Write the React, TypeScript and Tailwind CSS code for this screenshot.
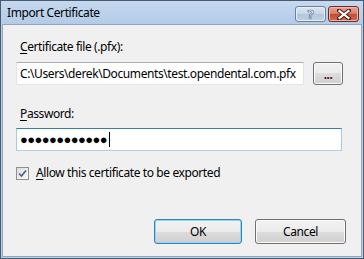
import React from "react";

const font = { fontFamily: '"Segoe UI", "Noto Sans", "Open Sans", sans-serif' };

const WinButton = ({ children, isDefault, className }: { children: React.ReactNode; isDefault?: boolean; className?: string }) => (
  <div
    className={`relative rounded-[3px] border ${isDefault ? "border-[#3c7fb1] shadow-[inset_0_0_0_1px_#7fdcfa]" : "border-[#707070] shadow-[inset_0_0_0_1px_#fbfbfb]"} bg-[linear-gradient(#f2f2f2_0%,#ebebeb_50%,#dddddd_50%,#cfcfcf_100%)] flex items-center justify-center text-[12px] text-black ${className ?? ""}`}
  >
    {children}
  </div>
);

export default function App() {
  return (
    <div className="w-[364px] h-[259px] bg-white tracking-[-0.4px]" style={font}>
      <div className="w-full h-full flex flex-col border border-[#4b5a6b] bg-[#b9d1ea]">
        {/* title bar */}
        <div className="h-[23px] flex items-center pl-[6px] pr-[4px] bg-[linear-gradient(#c5d9f0,#b3cbe7)]">
          <span className="text-[12px] text-black leading-none">Import Certificate</span>
          <div className="ml-auto flex items-center gap-[2px] pt-[3px]">
            <div className="w-[31px] h-[16px] rounded-[3px] border border-[#6f7f96] bg-[linear-gradient(#dbe6f3_0%,#c6d6ea_50%,#b1c6df_50%,#bfd2e8_100%)] flex items-center justify-center shadow-[inset_0_0_0_1px_#e8eff8]">
              <span className="text-[13px] font-bold leading-none text-white [-webkit-text-stroke:0.6px_#4c5c73]">?</span>
            </div>
            <div className="w-[31px] h-[16px] rounded-[3px] border border-[#6b2a22] bg-[linear-gradient(#e8a596_0%,#d67a68_50%,#c24a33_50%,#d06a50_100%)] flex items-center justify-center shadow-[inset_0_0_0_1px_#efb8ac]">
              <svg width="14" height="11" viewBox="0 0 14 11">
                <path d="M2 1.5 L12 9.5 M12 1.5 L2 9.5" stroke="#4a1a14" strokeWidth="4" strokeLinecap="square" />
                <path d="M2.5 2 L11.5 9 M11.5 2 L2.5 9" stroke="#ffffff" strokeWidth="2.2" strokeLinecap="square" />
              </svg>
            </div>
          </div>
        </div>
        {/* client area */}
        <div className="flex-1 mx-[1px] mb-[1px] border border-[#8ea6c2] bg-[#f0f0f0] flex flex-col pl-[13px] pt-[14px] pb-[12px]">
          <div className="ml-[4px] h-[16px] text-[12px] leading-[16px] text-black">
            <span className="underline underline-offset-2">C</span>ertificate file (.pfx):
          </div>
          <div className="mt-[7px] flex items-center">
            <div className="w-[288px] h-[23px] bg-white border border-[#e2e3ea] border-t-[#abadb3] border-b-[#e3e9ef] flex items-center pl-[3px] text-[12px] text-black whitespace-nowrap overflow-hidden">
              C:\Users\derek\Documents\test.opendental.com.pfx
            </div>
            <WinButton className="ml-[9px] w-[30px] h-[23px]">
              <span className="text-[#4a1010] text-[12px] font-bold leading-none tracking-[-0.5px] pt-[3px]">...</span>
            </WinButton>
          </div>
          <div className="mt-[21px] ml-[4px] h-[16px] text-[12px] leading-[16px] text-black">
            <span className="underline underline-offset-2">P</span>assword:
          </div>
          <div className="mt-[6px] w-[326px] h-[23px] bg-white border border-[#a4c9e3] border-t-[#3d7bad] border-b-[#b5cfe7] flex items-center pl-[3px]">
            <span className="text-[13px] leading-none text-black tracking-[-0.6px]">●●●●●●●●●●●●</span>
            <span className="w-[1px] h-[15px] bg-black ml-[2px]" />
          </div>
          <div className="mt-[14px] flex items-center h-[16px]">
            <div className="w-[13px] h-[13px] border border-[#8e8f8f] bg-[linear-gradient(135deg,#dcdcdc,#fbfbfb)] flex items-center justify-center">
              <svg width="9" height="9" viewBox="0 0 9 9">
                <path d="M1 4.5 L3.5 7 L8 1.5" stroke="#4a5f97" strokeWidth="1.6" fill="none" />
              </svg>
            </div>
            <span className="ml-[7px] text-[12px] leading-[16px] text-black">
              <span className="underline underline-offset-2">A</span>llow this certificate to be exported
            </span>
          </div>
          <div className="mt-auto flex justify-end pr-[15px] gap-[13px]">
            <WinButton isDefault className="w-[88px] h-[25px]">OK</WinButton>
            <WinButton className="w-[91px] h-[25px]">Cancel</WinButton>
          </div>
        </div>
      </div>
    </div>
  );
}
